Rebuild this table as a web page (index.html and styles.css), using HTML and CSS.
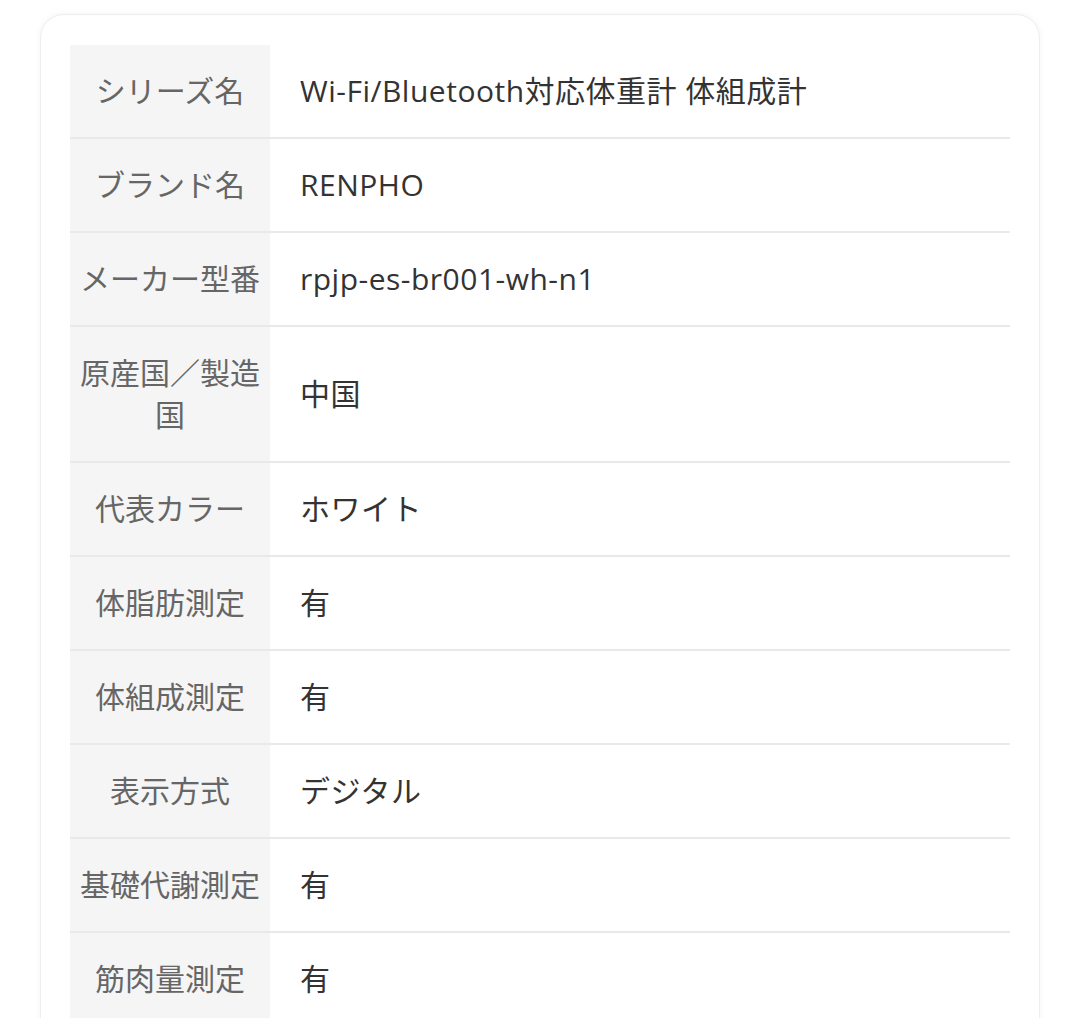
FILE: index.html
```html
<!DOCTYPE html>
<html lang="ja">
<head>
<meta charset="utf-8">
<link rel="stylesheet" href="styles.css">
</head>
<body>
<div class="card">
  <table class="spec">
    <tr><th>シリーズ名</th><td>Wi-Fi/Bluetooth対応体重計 体組成計</td></tr>
    <tr><th>ブランド名</th><td>RENPHO</td></tr>
    <tr><th>メーカー型番</th><td>rpjp-es-br001-wh-n1</td></tr>
    <tr><th>原産国／製造国</th><td>中国</td></tr>
    <tr><th>代表カラー</th><td>ホワイト</td></tr>
    <tr><th>体脂肪測定</th><td>有</td></tr>
    <tr><th>体組成測定</th><td>有</td></tr>
    <tr><th>表示方式</th><td>デジタル</td></tr>
    <tr><th>基礎代謝測定</th><td>有</td></tr>
    <tr><th>筋肉量測定</th><td>有</td></tr>
  </table>
</div>
</body>
</html>
```
FILE: styles.css
```css
html, body {
  margin: 0;
  padding: 0;
  background: #ffffff;
}
body {
  font-family: "Open Sans", "Noto Sans CJK JP", sans-serif;
  padding: 14px 40px 0 40px;
  height: 1018px;
  box-sizing: border-box;
  overflow: hidden;
}
.card {
  background: #fff;
  border-radius: 24px;
  border: 1px solid #eeeeee;
  box-shadow: 0 0 6px rgba(0,0,0,0.05);
  padding: 30px 29px 0 29px;
}
.spec {
  width: 100%;
  border-collapse: collapse;
  font-size: 30px;
  line-height: 42px;
  font-weight: 400;
}
.spec tr {
  border-bottom: 2px solid #e9e9e9;
}
.spec tr:last-child {
  border-bottom: none;
}
.spec th {
  width: 180px;
  background: #f5f5f5;
  color: #666;
  font-weight: 400;
  text-align: center;
  padding: 25px 10px;
}
.spec tr:last-child th,
.spec tr:last-child td {
  padding-bottom: 40px;
}
.spec td {
  color: #333;
  text-align: left;
  padding: 25px 30px;
  letter-spacing: 0.5px;
}
```
